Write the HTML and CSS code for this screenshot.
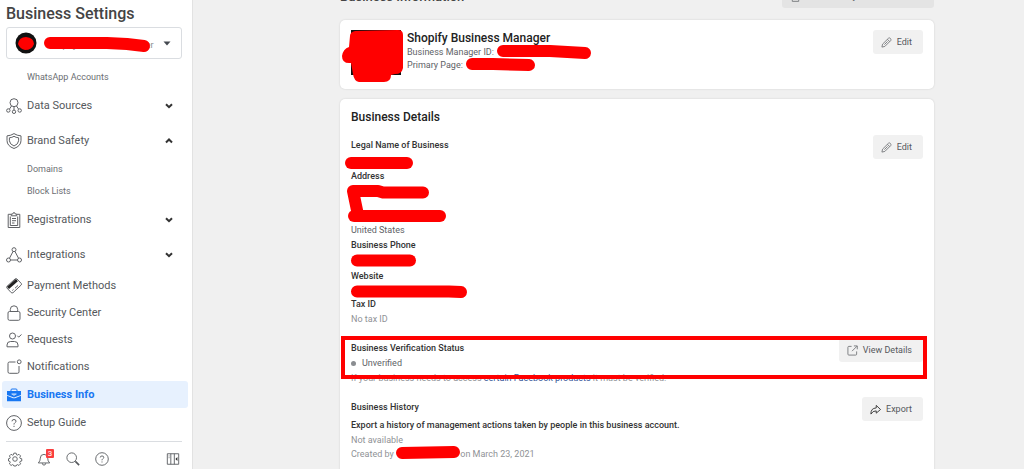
FILE: index.html
```html
<!DOCTYPE html>
<html lang="en">
<head>
  <meta charset="utf-8">
  <title>Business Settings</title>
  <link rel="stylesheet" href="styles.css">
</head>
<body>
  <div class="container">
    <div class="sidebar">
      <h1>Business Settings</h1>
      <div class="account">
        <svg class="account-logo" width="22" height="22" viewBox="0 0 22 22"><circle cx="11" cy="11" r="10.5" fill="#111"/><path d="M3 12Q4 5 11 5Q19 6 19 12Q17 18 10 18Q5 17 3 12Z" fill="#f00"/></svg>
        <select id="account" aria-label="Business account">
          <option>Shopify Business Manager</option>
        </select>
        <svg class="account-mark" width="108" height="18" viewBox="0 0 108 18"><path d="M7 7H64L84 8 101 10" class="marker"/></svg>
        <svg class="caret" width="8" height="5" viewBox="0 0 8 5"><path d="M0.500 0.500h7L4 4.500z" fill="#444950"/></svg>
      </div>

      <nav>
        <a href="#" class="sub">WhatsApp Accounts</a>
        <a href="#" class="item group">
          <svg class="icon" viewBox="0 0 16 16"><circle cx="8" cy="4.700" r="4"/><path d="M5.500 8 3.500 11M10.500 8l2 3M8 8.700v3.300"/><circle cx="2.300" cy="12.500" r="1.700"/><circle cx="8" cy="13.800" r="1.700"/><circle cx="13.700" cy="12.500" r="1.700"/></svg>
          <span>Data Sources</span>
          <svg class="chevron" viewBox="0 0 8 6"><path d="M1 1.200 4 4.200 7 1.200"/></svg>
        </a>
        <a href="#" class="item group">
          <svg class="icon" viewBox="0 0 16 16"><path d="M8 .6Q11 2.600 15 2.900V7.500Q15 13 8 15.500Q1 13 1 7.500V2.900Q5 2.600 8 .6Z"/><path d="M8 3.300Q10 4.600 12.600 4.800V7.800Q12.300 11.300 8 13Q3.700 11.300 3.400 7.800V4.800Q6 4.600 8 3.300Z"/></svg>
          <span>Brand Safety</span>
          <svg class="chevron" viewBox="0 0 8 6"><path d="M1 4.500 4 1.500 7 4.500"/></svg>
        </a>
        <a href="#" class="sub">Domains</a>
        <a href="#" class="sub">Block Lists</a>
        <a href="#" class="item group">
          <svg class="icon" viewBox="0 0 16 16"><path d="M5 2.300H2.200V15.500h11.600V2.300H11"/><path d="M5.300 3.800V2h1.500Q7 .5 8 .5T9.200 2h1.500v1.800z"/><path d="M4.300 4.500v9h7.400v-9M6 6.500h4M6 8.700h4M6 11h2.500"/></svg>
          <span>Registrations</span>
          <svg class="chevron" viewBox="0 0 8 6"><path d="M1 1.200 4 4.200 7 1.200"/></svg>
        </a>
        <a href="#" class="item group">
          <svg class="icon" viewBox="0 0 16 16"><circle cx="8" cy="2.700" r="2"/><circle cx="2.500" cy="13" r="2"/><circle cx="13.500" cy="13" r="2"/><path d="M7 4.500 3.500 11.200M9 4.500l3.500 6.700M4.500 13h7"/></svg>
          <span>Integrations</span>
          <svg class="chevron" viewBox="0 0 8 6"><path d="M1 1.200 4 4.200 7 1.200"/></svg>
        </a>
        <a href="#" class="item">
          <svg class="icon" viewBox="0 0 16 16"><path d="M.8 8.500 9 1Q10 .3 11 1L15.300 5.500Q15.800 6.300 15.200 7L7 14.700Q6 15.300 5.200 14.600L.9 10Q.5 9.200.8 8.500Z"/><path d="M2 9.900 10.900 2.100" stroke-width="3" stroke="#222"/><path d="M6.300 12.500l1.200-1.100M9 10.200l3-2.700"/></svg>
          <span>Payment Methods</span>
        </a>
        <a href="#" class="item">
          <svg class="icon" viewBox="0 0 16 16"><rect x="2" y="6.500" width="12" height="8.800" rx="1.500"/><path d="M4.300 6.500V4.500a3.700 3.700 0 0 1 7.400 0v2"/></svg>
          <span>Security Center</span>
        </a>
        <a href="#" class="item">
          <svg class="icon" viewBox="0 0 16 16"><circle cx="6.500" cy="4" r="3"/><path d="M1 14.800V13Q1 9.500 4.500 9.500H8.500Q12 9.500 12 13V14.800Z"/><path d="M11.300 3.700l1.400 1.400L15.500 2.500"/></svg>
          <span>Requests</span>
        </a>
        <a href="#" class="item">
          <svg class="icon" viewBox="0 0 16 16"><path d="M9.500 3H3.500Q2 3 2 4.500V12.800Q2 14.300 3.500 14.300H11.500Q13 14.300 13 12.800V7"/><circle cx="13.200" cy="2.800" r="1.900"/></svg>
          <span>Notifications</span>
        </a>
        <a href="#" class="item active">
          <svg class="icon" viewBox="0 0 16 16"><path d="M5 4V3Q5 2 6 2h4q1 0 1 1v1"/><path d="M1 4h14v4L8 10.500 1 8z" class="solid"/><path d="M1 8.800l6 2.400h2L15 8.800V14.300H1z" class="solid"/><path d="M5.500 7h5M6.500 7 8 8.500 9.500 7" stroke="#fff" stroke-width=".8"/></svg>
          <span>Business Info</span>
        </a>
        <a href="#" class="item">
          <svg class="icon" viewBox="0 0 16 16"><circle cx="8" cy="8" r="7.400"/><path d="M6 6.300Q6 4.500 8 4.500T10 6.200Q10 7.200 8.800 7.900Q8 8.400 8 9.500M8 10.800v1.200"/></svg>
          <span>Setup Guide</span>
        </a>
      </nav>

      <div class="tools">
        <button aria-label="Settings"><svg class="tool-icon" viewBox="0 0 16 16"><circle cx="8" cy="8" r="2.600"/><path d="M6.700 1.300h2.600l.5 1.900 1 .4 1.700-1 1.900 1.900-1 1.700.4 1 1.900.5v2.600l-1.900.5-.4 1 1 1.700-1.900 1.900-1.700-1-1 .4-.5 1.200H6.700l-.5-1.200-1-.4-1.700 1-1.900-1.900 1-1.700-.4-1L.6 10.300V7.700l1.600-.5.4-1-1-1.700 1.900-1.900 1.700 1 1-.4z"/></svg></button>
        <button aria-label="Alerts"><svg class="tool-icon" viewBox="0 0 16 16"><path d="M1.500 12.500Q3.800 10.500 3.800 7Q3.800 2.700 8 2.700T12.200 7Q12.200 10.500 14.500 12.500ZM6 12.800Q6.200 15 8 15T10 12.800"/></svg><span class="badge">3</span></button>
        <button aria-label="Search"><svg class="tool-icon" viewBox="0 0 16 16"><circle cx="6.500" cy="6.500" r="5.500"/><path d="M10.700 10.700 15 15" stroke-width="1.800"/></svg></button>
        <button aria-label="Help"><svg class="tool-icon" viewBox="0 0 16 16"><circle cx="8" cy="8" r="7.200"/><path d="M6 6.300Q6 4.500 8 4.500T10 6.200Q10 7.200 8.800 7.900Q8 8.400 8 9.500M8 10.800v1.200"/></svg></button>
        <button aria-label="Collapse menu" class="collapse"><svg class="tool-icon" viewBox="0 0 16 16"><path d="M1.500 2h13v12h-13zM5.500 2v12M9.500 2v12M3 4.500h1M3 6.500h1"/><path d="M13 5.800v4.400L10.800 8z" fill="#222" stroke="none"/></svg></button>
      </div>
    </div>

    <div class="main">
      <div class="page-header">
        <h2>Business Information</h2>
        <button class="btn delete">
          <svg class="btn-icon" viewBox="0 0 12 12"><path d="M1 3h10M4 3V1h4v2M2.500 3v8.300h7V3M5 5v4M7 5v4"/></svg>
          Permanently Delete Business
        </button>
      </div>

      <div class="card profile">
        <svg class="profile-image" width="52" height="46" viewBox="0 0 52 46"><rect width="50" height="45" fill="#111"/><path d="M4 1 47 0Q52 0 52 5V38Q51 44 44 44L40 45Q40 52 33 52H8Q3 51 2 44L0 33Q-9 34-9 26Q-8 19-2 17L-1 6Q-1 2 4 1Z" fill="#f00"/></svg>
        <div class="text">
          <h3>Shopify Business Manager</h3>
          <p>Business Manager ID: <svg class="mark" width="96" height="13" viewBox="0 0 96 13"><path d="M7 5H54L89 7" class="marker"/></svg></p>
          <p>Primary Page: <svg class="mark" width="72" height="13" viewBox="0 0 72 13"><path d="M7 5H28L64 6" class="marker"/></svg></p>
        </div>
        <button class="btn">
          <svg class="btn-icon" viewBox="0 0 12 12"><path d="M1 11l.7-3.200 6.500-6.500Q9.200.5 10.200 1.500T10.700 3.800L4.200 10.300ZM7 2.500l2.500 2.500M3.700 8.300 7.200 4.800"/></svg>
          Edit
        </button>
      </div>

      <div class="card details">
        <h3>Business Details</h3>
        <div class="section">
          <dl class="text">
            <dt>Legal Name of Business</dt>
            <dd><svg class="block-mark" width="76" height="17" viewBox="0 0 76 17"><path d="M0 11H56" class="marker"/></svg></dd>
            <dt>Address</dt>
            <dd><svg class="block-mark" width="100" height="40" viewBox="0 0 100 40"><path d="M72 9.500H32L27 8H2L7 32" class="marker"/><path d="M3 33H89" class="marker"/></svg></dd>
            <dd class="spaced">United States</dd>
            <dt>Business Phone</dt>
            <dd><svg class="block-mark" width="76" height="17" viewBox="0 0 76 17"><path d="M6 8.500H59" class="marker"/></svg></dd>
            <dt>Website</dt>
            <dd><svg class="block-mark" width="120" height="14" viewBox="0 0 120 14"><path d="M6 8.500H98L110 9" class="marker"/></svg></dd>
            <dt>Tax ID</dt>
            <dd class="muted">No tax ID</dd>
          </dl>
          <button class="btn">
            <svg class="btn-icon" viewBox="0 0 12 12"><path d="M1 11l.7-3.200 6.500-6.500Q9.200.5 10.200 1.500T10.700 3.800L4.200 10.300ZM7 2.500l2.500 2.500M3.700 8.300 7.200 4.800"/></svg>
            Edit
          </button>
        </div>

        <div class="section verification">
          <div class="text">
            <h4>Business Verification Status</h4>
            <p class="status">Unverified</p>
            <p class="muted">If your business needs to access <a href="#">certain Facebook products</a> it must be verified.</p>
          </div>
          <button class="btn">
            <svg class="btn-icon" viewBox="0 0 12 12"><path d="M5 1.500H2Q1 1.500 1 2.500V10Q1 11 2 11H9.500Q10.500 11 10.500 10V7M7.500 1H11.200V4.700M11 1.200 5.500 6.700"/></svg>
            View Details
          </button>
          <div class="highlight"></div>
        </div>

        <div class="section">
          <div class="text">
            <h4>Business History</h4>
            <p class="history">Export a history of management actions taken by people in this business account.</p>
            <p class="muted">Not available</p>
            <p class="muted">Created by <svg class="mark" width="62" height="13" viewBox="0 0 62 13"><path d="M6 6 58 5" class="marker"/></svg> on March 23, 2021</p>
          </div>
          <button class="btn">
            <svg class="btn-icon dark" viewBox="0 0 12 12"><path d="M1 11Q.8 4.500 6.800 4.300V1.500L11.500 6 6.800 10V7.500Q3 7.300 1 11Z"/></svg>
            Export
          </button>
        </div>
      </div>
    </div>
  </div>
</body>
</html>
```

FILE: styles.css
```css
* {
  box-sizing: border-box;
}

body {
  font-family: Roboto, Arial, sans-serif;
  font-size: 9px;
  line-height: 14px;
  margin: 0;
  color: #606266;
  background-color: #f0f0f0;
}

h1,
h2,
h3,
h4,
p,
dl,
dd {
  margin: 0;
}

svg {
  overflow: visible;
  fill: none;
}

button,
select {
  font-family: inherit;
  font-size: 9px;
  border: none;
  cursor: pointer;
}

.container {
  display: flex;
  height: 100vh;
  overflow: hidden;
}

/* sidebar */
.sidebar {
  flex: 0 0 193px;
  display: flex;
  flex-direction: column;
  padding: 4px 10px 0 6px;
  background-color: #fff;
  border-right: 1px solid #e2e2e2;
}

h1 {
  font-size: 16px;
  line-height: 20px;
  font-weight: 500;
  color: #444;
}

.account {
  position: relative;
  display: flex;
  align-items: center;
  flex: none;
  height: 32px;
  margin: 3px 0 7px;
  padding: 0 10px 0 8px;
  border: 1px solid #dadde1;
  border-radius: 3px;
}

.account-logo {
  flex: none;
}

.account select {
  flex: 1;
  min-width: 0;
  margin-left: 10px;
  padding: 3px 0 0;
  appearance: none;
  background: none;
  color: #8a8d91;
}

.account-mark {
  position: absolute;
  left: 36px;
  top: 8px;
  pointer-events: none;
}

.caret {
  flex: none;
}

.marker {
  stroke: #f00;
  stroke-width: 12;
  stroke-linecap: round;
  stroke-linejoin: round;
}

nav {
  flex: none;
  margin: 0 -6px 0 -4px;
}

nav a {
  display: flex;
  align-items: center;
  text-decoration: none;
  color: #55585c;
}

.sub {
  height: 22px;
  padding-left: 25px;
  color: #6b6e72;
}

.item {
  height: 27px;
  padding: 0 15px 0 4px;
  gap: 5px;
  font-size: 11px;
}

.item span {
  flex: 1;
}

.group {
  height: 35px;
}

.icon {
  width: 16px;
  height: 16px;
  stroke: #606266;
}

.chevron {
  width: 8px;
  height: 6px;
  stroke: #333;
  stroke-width: 2;
}

.active {
  margin: 1px 0;
  border-radius: 3px;
  background-color: #e7f1fe;
}

nav .active {
  color: #1877f2;
  font-weight: 700;
}

.active .icon {
  stroke: #1877f2;
}

.active .solid {
  fill: #1877f2;
  stroke: none;
}

.tools {
  display: flex;
  align-items: center;
  flex: none;
  gap: 15px;
  height: 34px;
  margin-top: 5px;
  padding: 0 2px;
  border-top: 1px solid #dadde1;
}

.tools button {
  position: relative;
  display: flex;
  padding: 0;
  background: none;
}

.tool-icon {
  width: 14px;
  height: 14px;
  stroke: #55585c;
}

.tools .collapse {
  margin-left: auto;
}

.badge {
  position: absolute;
  top: -3px;
  right: -3px;
  width: 8px;
  height: 9px;
  font-size: 8px;
  line-height: 9px;
  text-align: center;
  color: #fff;
  background-color: #fa3e3e;
  border-radius: 1px;
}

/* content */
.main {
  flex: 1;
  min-width: 0;
  padding: 0 90px 0 147px;
}

/* scrolled mostly out of view */
.page-header {
  display: flex;
  justify-content: space-between;
  margin-top: -16px;
  margin-bottom: 12px;
}

.page-header h2 {
  font-size: 13px;
  line-height: 26px;
  height: 24px;
  font-weight: 500;
  color: #444;
}

.card {
  margin-bottom: 10px;
  padding: 10px 11px;
  background-color: #fff;
  border-radius: 5px;
  box-shadow: 0 0 2px rgba(0, 0, 0, 0.15);
}

h3 {
  font-size: 12px;
  line-height: 16px;
  font-weight: 500;
  color: #222;
}

.profile {
  display: flex;
  height: 69px;
}

.profile p {
  line-height: 13px;
}

.profile-image {
  flex: none;
  margin-right: 4px;
}

.mark {
  vertical-align: top;
}

.block-mark {
  display: block;
}

.btn {
  flex: none;
  align-self: flex-start;
  display: flex;
  align-items: center;
  gap: 5px;
  height: 24px;
  padding: 0 11px 0 8px;
  border-radius: 3px;
  color: #55585c;
  background-color: #f1f1f1;
}

.btn-icon {
  width: 11px;
  height: 11px;
  stroke: #77797d;
}

.dark {
  stroke: #333;
}

.delete {
  background-color: #e4e4e4;
}

.details h3 {
  margin-bottom: 10px;
}

.section {
  display: flex;
  position: relative;
  margin-bottom: 12px;
}

.text {
  flex: 1;
}

.section .text {
  padding-top: 3px;
}

dt,
h4,
.history {
  font-size: 9px;
  font-weight: 500;
  color: #333;
}

.spaced {
  margin-bottom: 1px;
}

.muted {
  color: #8f9296;
}

dd.muted {
  padding-top: 1px;
}

.status::before {
  content: "";
  display: inline-block;
  width: 5px;
  height: 5px;
  margin-right: 6px;
  border-radius: 50%;
  background-color: #8a8d91;
  vertical-align: middle;
}

.status {
  padding: 1px 0;
}

.verification a {
  color: #385898;
  text-decoration: none;
}

.highlight {
  position: absolute;
  top: -2px;
  left: -10px;
  right: -4px;
  height: 43px;
  border: 4px solid #f00;
  pointer-events: none;
}

.history {
  padding: 4px 0 1px;
}
```
